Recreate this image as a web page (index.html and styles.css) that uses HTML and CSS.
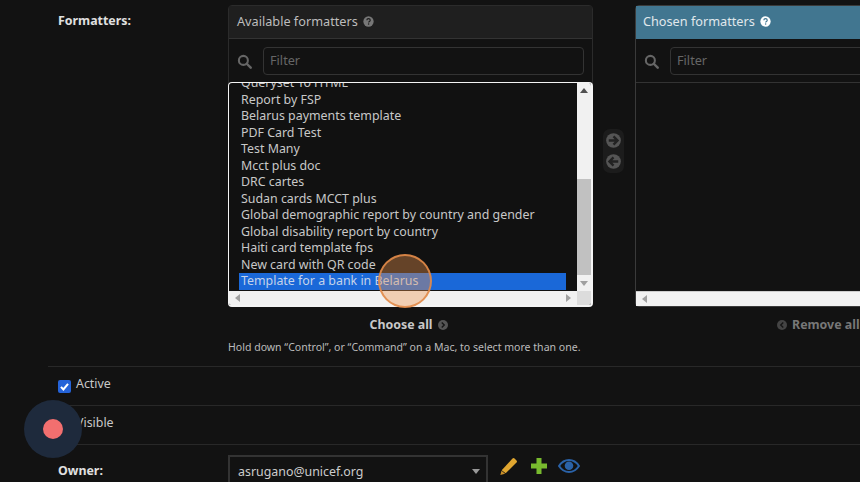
FILE: index.html
```html
<!DOCTYPE html>
<html lang="en">
<head>
    <meta charset="UTF-8">
    <title>Report template</title>
    <link rel="stylesheet" href="styles.css">
</head>
<body>
    <form class="page">
        <div class="row row-formatters">
            <div class="field-label">Formatters:</div>
            <div class="field-body">
                <div class="selector">
                    <div class="selector-column">
                        <div class="panel">
                            <div class="panel-title">Available formatters
                                <svg class="help" viewBox="0 0 16 16"><circle cx="8" cy="8" r="7.500" fill="currentColor"/><path d="M5.600 6.200c0-1.500 1.100-2.300 2.500-2.300s2.400.8 2.400 2.100c0 1.900-2.300 1.800-2.300 3.400" fill="none" stroke="#1c1c1c" stroke-width="1.700"/><circle cx="8.200" cy="11.800" r="1.100" fill="#1c1c1c"/></svg>
                            </div>
                            <div class="panel-filter">
                                <svg class="search" viewBox="0 0 16 16"><circle cx="6.800" cy="6.800" r="4.800" fill="none" stroke="currentColor" stroke-width="2.200"/><path d="M10.400 10.400l4.200 4.200" stroke="currentColor" stroke-width="2.600" stroke-linecap="round"/></svg>
                                <div class="filter-input">Filter</div>
                            </div>
                            <div class="listbox">
                                <div class="list-view">
                                    <ul class="options">
                                        <li>Queryset To HTML</li>
                                        <li>Report by FSP</li>
                                        <li>Belarus payments template</li>
                                        <li>PDF Card Test</li>
                                        <li>Test Many</li>
                                        <li>Mcct plus doc</li>
                                        <li>DRC cartes</li>
                                        <li>Sudan cards MCCT plus</li>
                                        <li>Global demographic report by country and gender</li>
                                        <li>Global disability report by country</li>
                                        <li>Haiti card template fps</li>
                                        <li>New card with QR code</li>
                                        <li class="selected">Template for a bank in Belarus</li>
                                    </ul>
                                </div>
                                <div class="vbar">
                                    <span class="arrow up"></span>
                                    <div class="vtrack"><div class="vthumb"></div></div>
                                    <span class="arrow down"></span>
                                </div>
                                <div class="hbar">
                                    <span class="arrow left"></span>
                                    <span class="arrow right"></span>
                                </div>
                                <div class="corner"></div>
                            </div>
                        </div>
                        <div class="choose-all">Choose all
                            <svg class="mini" viewBox="0 0 16 16"><circle cx="8" cy="8" r="8" fill="#555"/><path d="M6 4l4 4-4 4" fill="none" stroke="#151515" stroke-width="2.200"/></svg>
                        </div>
                    </div>

                    <div class="movers">
                        <svg class="mover" viewBox="0 0 16 16"><circle cx="8" cy="8" r="6.200" fill="#555"/><path d="M4 8h7M8 4.600L11.400 8 8 11.400" fill="none" stroke="#222" stroke-width="2"/></svg>
                        <svg class="mover" viewBox="0 0 16 16"><circle cx="8" cy="8" r="6.200" fill="#555"/><path d="M12 8H5M8 4.600L4.600 8 8 11.400" fill="none" stroke="#222" stroke-width="2"/></svg>
                    </div>

                    <div class="selector-column">
                        <div class="panel panel-chosen">
                            <div class="panel-title">Chosen formatters
                                <svg class="help" viewBox="0 0 16 16"><circle cx="8" cy="8" r="7.500" fill="currentColor"/><path d="M5.600 6.200c0-1.500 1.100-2.300 2.500-2.300s2.400.8 2.400 2.100c0 1.900-2.300 1.800-2.300 3.400" fill="none" stroke="#417690" stroke-width="1.700"/><circle cx="8.200" cy="11.800" r="1.100" fill="#417690"/></svg>
                            </div>
                            <div class="panel-filter">
                                <svg class="search" viewBox="0 0 16 16"><circle cx="6.800" cy="6.800" r="4.800" fill="none" stroke="currentColor" stroke-width="2.200"/><path d="M10.400 10.400l4.200 4.200" stroke="currentColor" stroke-width="2.600" stroke-linecap="round"/></svg>
                                <div class="filter-input">Filter</div>
                            </div>
                            <div class="chosen-box">
                                <div class="chosen-view"></div>
                                <div class="hbar">
                                    <span class="arrow left"></span>
                                </div>
                            </div>
                        </div>
                        <div class="remove-all">
                            <svg class="mini" viewBox="0 0 16 16"><circle cx="8" cy="8" r="8" fill="#444"/><path d="M10 4L6 8l4 4" fill="none" stroke="#151515" stroke-width="2.200"/></svg>
                            Remove all
                        </div>
                    </div>
                </div>
                <p class="help-text">Hold down “Control”, or “Command” on a Mac, to select more than one.</p>
            </div>
        </div>

        <div class="row row-check">
            <span class="checkbox"><svg viewBox="0 0 14 14"><path d="M3.200 7.400l2.600 2.800 5-6" fill="none" stroke="#fff" stroke-width="2.200"/></svg></span>
            <span class="check-label">Active</span>
        </div>
        <div class="row row-check">
            <span class="checkbox"><svg viewBox="0 0 14 14"><path d="M3.200 7.400l2.600 2.800 5-6" fill="none" stroke="#fff" stroke-width="2.200"/></svg></span>
            <span class="check-label">Visible</span>
        </div>

        <div class="row row-owner">
            <div class="field-label">Owner:</div>
            <div class="owner-select">asrugano@unicef.org<span class="select-caret"></span></div>
            <div class="owner-tools">
                <svg class="tool" width="19" height="19" viewBox="0 0 20 20"><path d="M14.200 1.600a1.600 1.600 0 0 1 2.200 0l2 2a1.600 1.600 0 0 1 0 2.200L7 17.200 2.800 14z" fill="#e0a630"/><path d="M2.600 14.600l3.800 3.100-5 1.300z" fill="#c98f2a"/></svg>
                <svg class="tool" width="18" height="18" viewBox="0 0 18 18"><path d="M6.500 1h5v5.500H17v5h-5.500V17h-5v-5.500H1v-5h5.500z" fill="#78ba2e"/></svg>
                <svg class="tool tool-eye" width="22" height="14" viewBox="0 0 22 14"><path d="M1 7c2.600-4 6-6 10-6s7.400 2 10 6c-2.600 4-6 6-10 6S3.600 11 1 7z" fill="none" stroke="#2a62a8" stroke-width="2"/><circle cx="11" cy="6.800" r="4.300" fill="#2a62a8"/></svg>
            </div>
        </div>
    </form>

    <div class="click-ring"></div>
    <div class="recorder"><span class="recorder-dot"></span></div>
</body>
</html>
```

FILE: styles.css
```css
html, body {
    height: 100%;
}
body {
    margin: 0;
    background-color: #121212;
    color: #c8c8c8;
    font-family: "Noto Sans", sans-serif;
    font-size: 12.4px;
    overflow: hidden;
}
.page {
    padding: 5px 0 0 48px;
    width: 1100px;
}
.row {
    border-bottom: 1px solid #282828;
}
.row-formatters {
    display: flex;
    height: 361px;
}
.field-label {
    width: 180px;
    padding-left: 10px;
    box-sizing: border-box;
    font-weight: bold;
    color: #e0e0e0;
    flex-shrink: 0;
}
.row-formatters .field-label {
    padding-top: 7px;
}
.selector {
    display: flex;
}
.selector-column {
    width: 365px;
}
.panel {
    height: 302px;
    display: flex;
    flex-direction: column;
    border-radius: 4px;
    border: 1px solid #2b2b2b;
    box-sizing: border-box;
}
.panel-title {
    height: 30px;
    padding: 0 0 2px 8px;
    background-color: #1f1f1f;
    border-bottom: 1px solid #333;
    display: flex;
    align-items: center;
    gap: 5px;
    font-size: 12.7px;
    color: #bdbdbd;
    flex-shrink: 0;
}
.help {
    width: 11px;
    height: 11px;
    color: #777;
}
.panel-chosen {
    border-color: #3a3a3a;
}
.panel-chosen .panel-title {
    padding-left: 7px;
    background-color: #417690;
    border-bottom-color: #417690;
    color: #e0e8ec;
}
.panel-chosen .help {
    color: #fff;
}
.panel-filter {
    height: 43px;
    display: flex;
    align-items: center;
    padding-left: 8px;
    gap: 11px;
    flex-shrink: 0;
}
.search {
    width: 15px;
    height: 15px;
    color: #666;
    margin-top: 2px;
}
.filter-input {
    flex: 1;
    height: 26px;
    margin-right: 8px;
    border: 1px solid #333;
    border-radius: 4px;
    padding-left: 6px;
    line-height: 24px;
    font-size: 12.7px;
    color: #666;
}
.listbox {
    margin: 0 -1px -1px;
    flex: 1;
    min-height: 0;
    display: grid;
    grid-template-columns: 1fr 14px;
    grid-template-rows: minmax(0, 1fr) 14px;
    background-color: #111;
    border: 2px solid #f4f4f4;
    border-width: 1px 2px 2px 1px;
    border-radius: 4px;
    overflow: hidden;
}
.list-view {
    overflow: hidden;
    padding: 0 11px 0 10px;
}
.options {
    list-style: none;
    margin: -8px 0 0;
    padding: 0;
}
.options li {
    height: 16.5px;
    line-height: 16.5px;
    padding-left: 2px;
    white-space: nowrap;
}
.options .selected {
    background-color: #1a68d8;
    color: #c5d3ea;
}
.vbar {
    background-color: #f1f1f1;
    display: flex;
    flex-direction: column;
    align-items: center;
    min-height: 0;
}
.vtrack {
    flex: 1;
    width: 100%;
    padding-top: 82px;
    box-sizing: border-box;
}
.vthumb {
    height: 96px;
    background-color: #c1c1c1;
}
.hbar {
    background-color: #f1f1f1;
    display: flex;
    justify-content: space-between;
    align-items: center;
    padding: 0 6px;
}
.corner {
    background-color: #dcdcdc;
}
.arrow {
    width: 0;
    height: 0;
    border: 4px solid transparent;
}
.arrow.up {
    border-top: 0;
    border-bottom: 5px solid #505050;
    margin: 5px 0 4px;
}
.arrow.down {
    border-bottom: 0;
    border-top: 5px solid #a0a0a0;
    margin: 4px 0 5px;
}
.arrow.left {
    border-left: 0;
    border-right: 5px solid #a0a0a0;
}
.arrow.right {
    border-right: 0;
    border-left: 5px solid #a0a0a0;
}
.chosen-box {
    flex: 1;
    min-height: 0;
    display: flex;
    flex-direction: column;
    border-top: 1px solid #333;
}
.chosen-view {
    flex: 1;
}
.chosen-box .hbar {
    height: 14px;
    border-top: 1px solid #ccc;
}
.movers {
    width: 21px;
    height: 44px;
    margin: 124px 11px 0 10px;
    padding: 2px 0;
    box-sizing: border-box;
    background-color: #1c1c1c;
    border-radius: 7px;
    display: flex;
    flex-direction: column;
    align-items: center;
    justify-content: space-between;
}
.mover {
    width: 19px;
    height: 19px;
}
.choose-all, .remove-all {
    margin-top: 9px;
    height: 16px;
    display: flex;
    align-items: center;
    justify-content: center;
    gap: 5px;
    font-weight: bold;
    color: #c8c8c8;
}
.choose-all {
    padding-right: 4px;
}
.remove-all {
    justify-content: flex-start;
    padding-left: 142px;
    color: #777;
}
.mini {
    width: 10px;
    height: 10px;
    margin-top: 2px;
}
.help-text {
    margin: 8px 0 0;
    font-size: 10.55px;
    line-height: 14px;
    color: #bbb;
}
.row-check {
    height: 38px;
    display: flex;
    padding-left: 10px;
    gap: 5px;
}
.checkbox {
    width: 13px;
    height: 13px;
    margin-top: 13px;
    border-radius: 2px;
    background-color: #2563d8;
    display: flex;
}
.checkbox svg {
    width: 13px;
    height: 13px;
}
.check-label {
    padding-top: 8px;
    line-height: 18px;
}
.row-owner {
    display: flex;
    border-bottom: 0;
    padding-top: 10px;
    height: 60px;
}
.row-owner .field-label {
    padding-top: 7px;
}
.owner-select {
    width: 260px;
    height: 40px;
    box-sizing: border-box;
    border: 2px solid #333;
    padding: 6px 0 0 8px;
    position: relative;
    color: #ccc;
}
.select-caret {
    position: absolute;
    right: 6px;
    top: 12px;
    border: 4px solid transparent;
    border-bottom: 0;
    border-top: 5px solid #999;
}
.owner-tools {
    display: flex;
    align-items: flex-start;
    gap: 12px;
    padding: 2px 0 0 11px;
}
.tool-eye {
    margin: 2px 0 0 -2px;
}
.click-ring {
    position: absolute;
    left: 378px;
    top: 254px;
    width: 54px;
    height: 54px;
    box-sizing: border-box;
    border-radius: 50%;
    border: 2px solid rgba(224, 138, 72, 0.9);
    background-color: rgba(240, 150, 80, 0.38);
}
.recorder {
    position: absolute;
    left: 24px;
    top: 400px;
    width: 58px;
    height: 58px;
    border-radius: 50%;
    background-color: #1e2a3c;
    display: flex;
    align-items: center;
    justify-content: center;
}
.recorder-dot {
    width: 20px;
    height: 20px;
    border-radius: 50%;
    background-color: #f26f6f;
}
```
